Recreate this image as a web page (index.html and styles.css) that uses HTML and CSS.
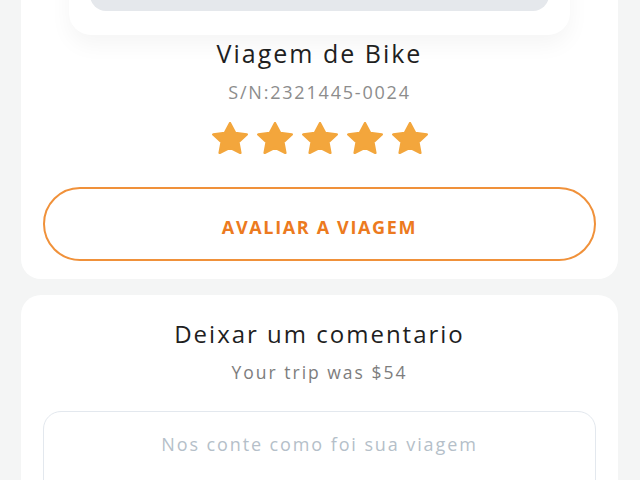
FILE: index.html
```html
<!DOCTYPE html>
<html lang="pt">
<head>
<meta charset="utf-8">
<title>Viagem de Bike</title>
<link rel="stylesheet" href="styles.css">
</head>
<body>
<main class="page">
  <section class="card trip-card">
    <div class="hero">
      <div class="hero-image"></div>
    </div>
    <h1 class="title">Viagem de Bike</h1>
    <p class="serial">S/N:2321445-0024</p>
    <div class="stars">
      <svg class="star" viewBox="1.25 1.25 21.5 20.5" preserveAspectRatio="none"><path d="M12 2l3.09 6.26L22 9.27l-5 4.87 1.18 6.88L12 17.77l-6.18 3.25L7 14.14 2 9.27l6.91-1.01L12 2z"/></svg>
      <svg class="star" viewBox="1.25 1.25 21.5 20.5" preserveAspectRatio="none"><path d="M12 2l3.09 6.26L22 9.27l-5 4.87 1.18 6.88L12 17.77l-6.18 3.25L7 14.14 2 9.27l6.91-1.01L12 2z"/></svg>
      <svg class="star" viewBox="1.25 1.25 21.5 20.5" preserveAspectRatio="none"><path d="M12 2l3.09 6.26L22 9.27l-5 4.87 1.18 6.88L12 17.77l-6.18 3.25L7 14.14 2 9.27l6.91-1.01L12 2z"/></svg>
      <svg class="star" viewBox="1.25 1.25 21.5 20.5" preserveAspectRatio="none"><path d="M12 2l3.09 6.26L22 9.27l-5 4.87 1.18 6.88L12 17.77l-6.18 3.25L7 14.14 2 9.27l6.91-1.01L12 2z"/></svg>
      <svg class="star" viewBox="1.25 1.25 21.5 20.5" preserveAspectRatio="none"><path d="M12 2l3.09 6.26L22 9.27l-5 4.87 1.18 6.88L12 17.77l-6.18 3.25L7 14.14 2 9.27l6.91-1.01L12 2z"/></svg>
    </div>
    <button class="rate-btn" type="button">AVALIAR A VIAGEM</button>
  </section>
  <section class="card comment-card">
    <h2 class="title title-sm">Deixar um comentario</h2>
    <p class="price">Your trip was $54</p>
    <textarea class="comment" placeholder="Nos conte como foi sua viagem"></textarea>
  </section>
</main>
</body>
</html>
```

FILE: styles.css
```css
* { box-sizing: border-box; }
html, body { margin: 0; padding: 0; }
body {
  background: #f4f5f5;
  font-family: "Open Sans", "Noto Sans", sans-serif;
  overflow: hidden;
}
.page {
  padding: 0 22px 0 21px;
}
.card {
  background: #ffffff;
  border-radius: 20px;
  padding: 0 22px;
}
.trip-card {
  margin-top: -215px;
  padding-top: 14px;
  padding-bottom: 18px;
  display: flex;
  flex-direction: column;
  align-items: center;
}
.hero {
  align-self: stretch;
  margin: 0 26px;
  padding: 12px 21px 24px;
  background: #ffffff;
  border-radius: 22px;
  box-shadow: 0 10px 22px rgba(0, 0, 0, 0.045);
}
.hero-image {
  height: 200px;
  border-radius: 16px;
  background: #e5e8ec;
}
.title {
  margin: 1px 0 0;
  font-size: 25px;
  line-height: 34px;
  font-weight: 400;
  color: #1f1f1f;
  letter-spacing: 2px;
}
.serial {
  margin: 10px 0 0;
  font-size: 18px;
  line-height: 24px;
  color: #8c8c8c;
  letter-spacing: 1.8px;
}
.stars {
  margin-top: 18px;
  display: flex;
  gap: 9px;
}
.star {
  width: 36px;
  height: 32px;
  display: block;
}
.star path {
  fill: #f3a63c;
  stroke: #f3a63c;
  stroke-width: 1.5;
  stroke-linejoin: round;
}
.rate-btn {
  align-self: stretch;
  margin-top: 33px;
  height: 74px;
  border: 2px solid #f0913a;
  border-radius: 37px;
  background: #ffffff;
  color: #ec7a20;
  font-family: "Open Sans", "Noto Sans", sans-serif;
  font-size: 18px;
  font-weight: 700;
  letter-spacing: 1.65px;
  display: flex;
  align-items: center;
  justify-content: center;
  padding: 6px 0 0;
}
.comment-card {
  margin-top: 16px;
  padding-top: 23px;
  padding-bottom: 40px;
  display: flex;
  flex-direction: column;
  align-items: center;
}
.title-sm {
  margin: 0;
  font-size: 24px;
  line-height: 32px;
  letter-spacing: 2px;
}
.price {
  margin: 10px 0 0;
  font-size: 17.5px;
  line-height: 24px;
  color: #7d7d7d;
  letter-spacing: 2px;
}
.comment {
  align-self: stretch;
  margin-top: 27px;
  height: 140px;
  border: 1px solid #e3e8ee;
  border-radius: 18px;
  padding: 19px 20px 17px;
  font-family: "Open Sans", "Noto Sans", sans-serif;
  font-size: 18px;
  line-height: 26px;
  text-align: center;
  color: #333;
  letter-spacing: 1.9px;
  resize: none;
  outline: none;
}
.comment::placeholder {
  color: #b5bfc9;
}
```
